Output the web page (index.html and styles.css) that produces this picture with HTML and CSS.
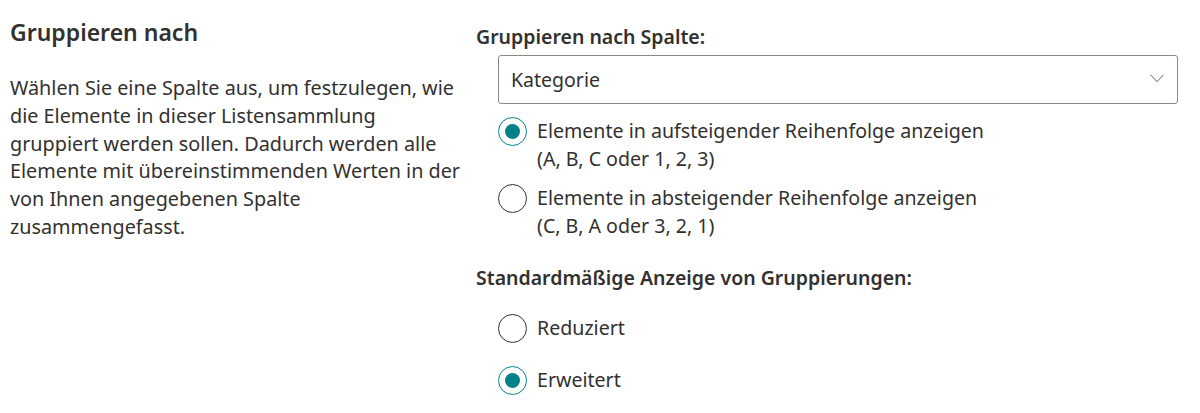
FILE: index.html
```html
<!DOCTYPE html>
<html lang="de">
<head>
    <meta charset="UTF-8">
    <title>Gruppieren nach</title>
    <link rel="stylesheet" href="styles.css">
</head>
<body>
    <div class="page">
        <div class="intro">
            <h2>Gruppieren nach</h2>
            <p>Wählen Sie eine Spalte aus, um festzulegen, wie die Elemente in dieser Listensammlung gruppiert werden sollen. Dadurch werden alle Elemente mit übereinstimmenden Werten in der von Ihnen angegebenen Spalte zusammengefasst.</p>
        </div>

        <div class="settings">
            <div class="field-label">Gruppieren nach Spalte:</div>
            <div class="dropdown">
                <span>Kategorie</span>
                <svg class="chevron" width="14" height="9" viewBox="0 0 14 9">
                    <path d="M0.5 0.8 L7 7.6 L13.5 0.8" fill="none" stroke="#605e5c" stroke-width="1"/>
                </svg>
            </div>

            <div class="choices order">
                <label class="choice">
                    <span class="radio checked"></span>
                    <span class="text">Elemente in aufsteigender Reihenfolge anzeigen<br>(A, B, C oder 1, 2, 3)</span>
                </label>
                <label class="choice">
                    <span class="radio"></span>
                    <span class="text">Elemente in absteigender Reihenfolge anzeigen<br>(C, B, A oder 3, 2, 1)</span>
                </label>
            </div>

            <div class="field-label second">Standardmäßige Anzeige von Gruppierungen:</div>
            <div class="choices display">
                <label class="choice">
                    <span class="radio"></span>
                    <span class="text">Reduziert</span>
                </label>
                <label class="choice">
                    <span class="radio checked"></span>
                    <span class="text">Erweitert</span>
                </label>
            </div>
        </div>
    </div>
</body>
</html>
```

FILE: styles.css
```css
body {
    margin: 0;
    font-family: "Noto Sans", "Open Sans", sans-serif;
    color: #323130;
    background: #fff;
}
.page {
    display: flex;
    padding: 16px 0 0 10px;
}
.intro {
    width: 450px;
    flex-shrink: 0;
}
.intro h2 {
    margin: 0;
    font-size: 23px;
    font-weight: 600;
    line-height: 32px;
}
.intro p {
    margin: 26px 0 0;
    font-size: 19.8px;
    line-height: 27.8px;
}
.settings {
    margin-left: 16px;
    padding-top: 7px;
    width: 702px;
}
.field-label {
    font-size: 19.5px;
    font-weight: 600;
    line-height: 28px;
}
.field-label.second {
    margin-top: 24px;
}
.dropdown {
    margin: 4px 0 0 22px;
    height: 47px;
    border: 1px solid #8a8886;
    border-radius: 3px;
    display: flex;
    align-items: center;
    justify-content: space-between;
    padding: 0 13px 0 12px;
    font-size: 19.5px;
}
.chevron {
    margin-top: -2px;
}
.choices {
    margin-left: 22px;
    display: flex;
    flex-direction: column;
}
.choices.order {
    margin-top: 13px;
    gap: 11px;
}
.choices.display {
    margin-top: 22px;
    gap: 23px;
}
.choice {
    display: flex;
    align-items: flex-start;
    gap: 10px;
    font-size: 19.6px;
    line-height: 28px;
}
.radio {
    width: 29px;
    height: 29px;
    border: 1px solid #323130;
    border-radius: 50%;
    box-sizing: border-box;
    flex-shrink: 0;
    position: relative;
}
.radio.checked {
    border-color: #038387;
}
.radio.checked::after {
    content: "";
    position: absolute;
    left: 6px;
    top: 6px;
    width: 15px;
    height: 15px;
    border-radius: 50%;
    background: #038387;
}
```
